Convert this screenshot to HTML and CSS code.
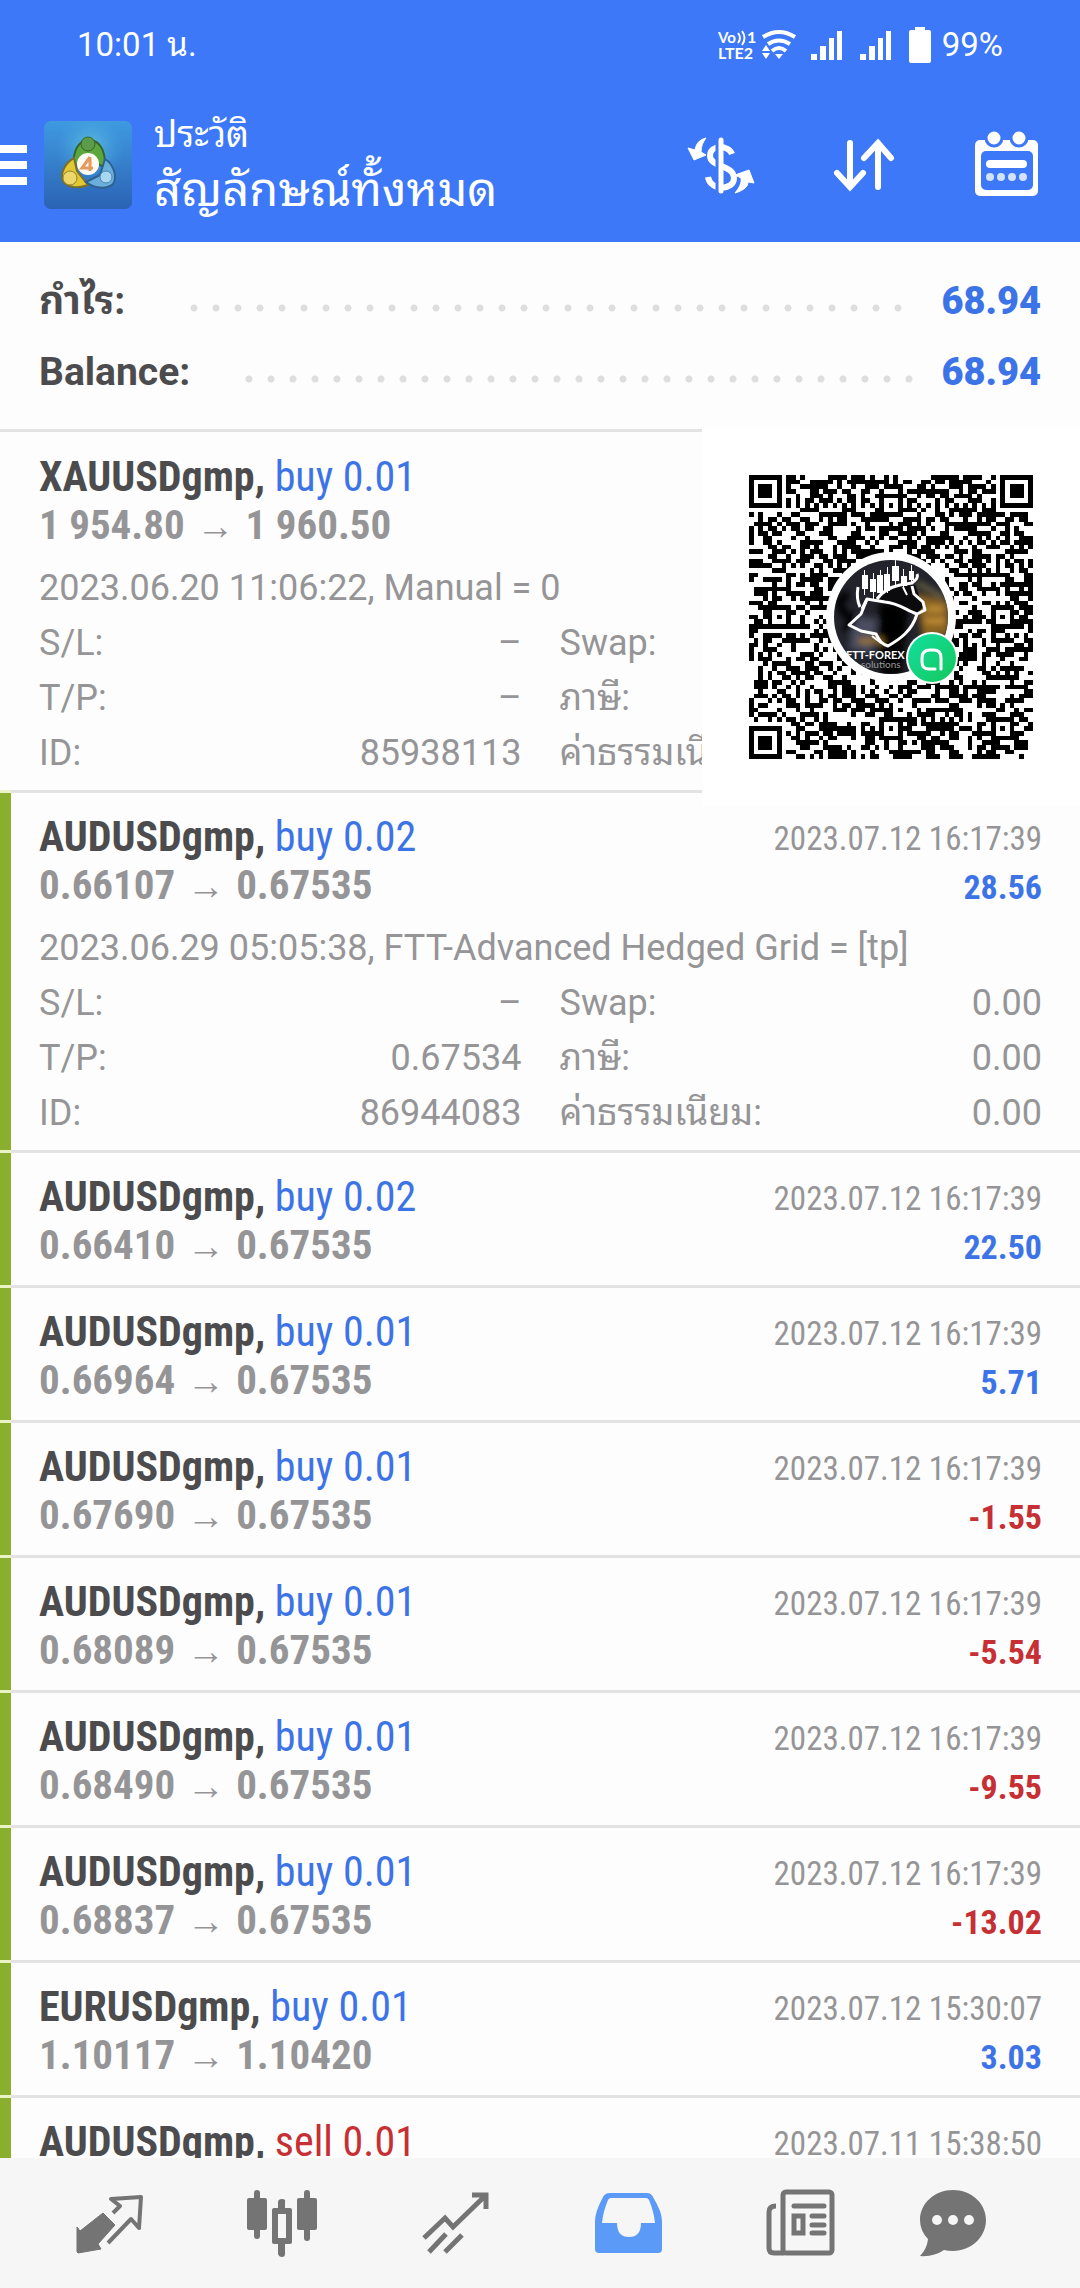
FILE: index.html
```html
<!DOCTYPE html>
<html lang="th">
<head>
    <meta charset="UTF-8">
    <meta name="viewport" content="width=device-width, initial-scale=1.0">
    <title>ประวัติ</title>
    <link rel="stylesheet" href="styles.css">
</head>
<body>
    <header class="header">
        <div class="status-bar">
            <span class="clock">10:01 น.</span>
            <div class="status-icons">
                <svg class="volte" width="40" height="36" viewBox="0 0 40 36" fill="#fff">
                    <text x="0" y="16" font-size="15">Vo</text>
                    <path d="M20 6q4 5 0 10M24 4q5 7 0 14" fill="none" stroke="#fff" stroke-width="2"/>
                    <text x="29" y="16" font-size="16">1</text>
                    <text x="0" y="32" font-size="16">LTE2</text>
                </svg>
                <svg class="wifi" width="36" height="36" viewBox="0 0 36 36">
                    <g fill="none" stroke="#fff" stroke-width="4">
                        <path d="M2 10Q18 0 34 10"/>
                        <path d="M7 17Q18 10 29 17"/>
                        <path d="M11 24Q18 18 25 24"/>
                    </g>
                    <path d="M14 27h8l-4 5zM1 24h8l-4-6zM1 26h8l-4 6z" fill="#fff"/>
                </svg>
                <svg class="signal" width="32" height="36" viewBox="0 0 32 36" fill="#fff">
                    <path d="M0 27h6v6H0zM9 19h6v14H9zM18 11h5v22h-5zM26 4h5v29h-5z"/>
                </svg>
                <svg class="signal" width="32" height="36" viewBox="0 0 32 36" fill="#fff">
                    <path d="M0 27h6v6H0zM9 19h6v14H9zM18 11h5v22h-5zM26 4h5v29h-5z"/>
                </svg>
                <svg width="22" height="36" viewBox="0 0 22 36" fill="#fff">
                    <path d="M6 0h10v3h4q2 0 2 2v29q0 2-2 2H2q-2 0-2-2V5q0-2 2-2h4z"/>
                </svg>
                <span class="battery">99%</span>
            </div>
        </div>

        <div class="toolbar">
            <button class="menu-button" aria-label="Menu"><i></i><i></i><i></i></button>
            <svg class="app-logo" width="88" height="88" viewBox="0 0 88 88">
                <defs>
                    <linearGradient id="logoBg" x1="0" y1="0" x2="0" y2="1">
                        <stop offset="0" stop-color="#3f9ae0"/>
                        <stop offset="1" stop-color="#2b62b4"/>
                    </linearGradient>
                    <radialGradient id="logoGlow">
                        <stop offset="0" stop-color="#5fc0dc"/>
                        <stop offset="1" stop-color="#3f9ae0" stop-opacity="0"/>
                    </radialGradient>
                </defs>
                <rect width="88" height="88" rx="7" fill="url(#logoBg)"/>
                <circle cx="46" cy="26" r="36" fill="url(#logoGlow)"/>
                <path d="M30 46C28 28 36 19 45 19s17 8 16 28L46 38z" fill="#5da63d" stroke="#35652c" stroke-width="2"/>
                <circle cx="44" cy="23" r="7" fill="#5c9b49" stroke="#35652c" stroke-width="1"/>
                <path d="M30 37C20 42 16 54 19 60c5 8 18 7 25 4L33 50z" fill="#e3c832" stroke="#76702c" stroke-width="2"/>
                <circle cx="26" cy="57" r="7" fill="#eed76a" stroke="#8f7f2e" stroke-width="1"/>
                <path d="M61 38c8 5 13 17 8 25-7 6-20 4-27-2l14-7z" fill="#6aaedb" stroke="#2d6190" stroke-width="2"/>
                <circle cx="62" cy="56" r="6" fill="#a9d7f0" stroke="#4786b5" stroke-width="1"/>
                <circle cx="44" cy="43" r="11" fill="#fffaf4"/>
                <path d="M46 36l-8 11h11M46 36v14" fill="none" stroke="#e39a5c" stroke-width="3"/>
            </svg>
            <div class="titles">
                <div class="subtitle">ประวัติ</div>
                <h1 class="title">สัญลักษณ์ทั้งหมด</h1>
            </div>
            <div class="actions">
                <button class="icon-button" aria-label="Deals">
                    <svg width="72" height="72" viewBox="0 0 72 72">
                        <path d="M47 25C44 16 25 15 25 27c0 11 24 9 24 22 0 13-24 13-26-1" fill="none" stroke="#fff" stroke-width="6"/>
                        <path d="M33 8v57" stroke="#3c78f8" stroke-width="5"/>
                        <path d="M36 11v51" stroke="#fff" stroke-width="5" stroke-linecap="round"/>
                        <path d="M21 9C13 11 11 16 10 21l-7-2 6 12 12-5-5-3c0-6 2-10 5-14zM50 64c10-3 13-7 13-11l6 1-5-13-14 5 6 3c1 5-2 10-6 15z" fill="#fff" stroke="#fff" stroke-width="1" stroke-linejoin="round"/>
                    </svg>
                </button>
                <button class="icon-button" aria-label="Sort">
                    <svg width="72" height="72" viewBox="0 0 72 72" fill="none" stroke="#fff" stroke-width="6" stroke-linecap="round">
                        <path d="M22 14v44M9 44l13 14 13-14M50 58V14M36 29l14-15 13 15"/>
                    </svg>
                </button>
                <button class="icon-button" aria-label="Calendar">
                    <svg width="72" height="72" viewBox="0 0 72 72">
                        <rect x="4" y="11" width="63" height="56" rx="5" fill="#fff"/>
                        <rect x="10" y="22" width="52" height="39" rx="5" fill="#3c78f8"/>
                        <g fill="#fff" stroke="#3c78f8" stroke-width="3">
                            <circle cx="23" cy="9" r="8"/>
                            <circle cx="48" cy="9" r="8"/>
                        </g>
                        <rect x="15" y="31" width="41" height="8" rx="4" fill="#fff"/>
                        <g fill="#d3e3ff">
                            <circle cx="19" cy="48" r="4"/>
                            <circle cx="30" cy="48" r="4"/>
                            <circle cx="41" cy="48" r="4"/>
                            <circle cx="52" cy="48" r="4"/>
                        </g>
                    </svg>
                </button>
            </div>
        </div>
    </header>

    <main class="content">
        <section class="summary">
            <div class="summary-row"><span class="label">กำไร:</span><i class="dots"></i><b class="total blue">68.94</b></div>
            <div class="summary-row"><span class="label">Balance:</span><i class="dots"></i><b class="total blue">68.94</b></div>
        </section>

        <div class="history">
            <ul class="deals">
                <li class="deal">
                    <div class="deal-body plain">
                        <div class="line"><span class="symbol">XAUUSDgmp, <span class="side blue">buy 0.01</span></span></div>
                        <div class="line"><span class="prices">1 954.80 <span class="arrow">→</span> 1 960.50</span></div>
                        <div class="details">
                            <p class="comment">2023.06.20 11:06:22, Manual = 0</p>
                            <dl>
                                <div><dt>S/L:</dt><dd>–</dd></div>
                                <div><dt>Swap:</dt><dd></dd></div>
                                <div><dt>T/P:</dt><dd>–</dd></div>
                                <div><dt>ภาษี:</dt><dd></dd></div>
                                <div><dt>ID:</dt><dd>85938113</dd></div>
                                <div><dt>ค่าธรรมเนียม:</dt><dd></dd></div>
                            </dl>
                        </div>
                    </div>
                </li>
                <li class="deal">
                    <div class="deal-body">
                        <div class="line"><span class="symbol">AUDUSDgmp, <span class="side blue">buy 0.02</span></span><time>2023.07.12 16:17:39</time></div>
                        <div class="line"><span class="prices">0.66107 <span class="arrow">→</span> 0.67535</span><b class="profit blue">28.56</b></div>
                        <div class="details">
                            <p class="comment">2023.06.29 05:05:38, FTT-Advanced Hedged Grid = [tp]</p>
                            <dl>
                                <div><dt>S/L:</dt><dd>–</dd></div>
                                <div><dt>Swap:</dt><dd>0.00</dd></div>
                                <div><dt>T/P:</dt><dd>0.67534</dd></div>
                                <div><dt>ภาษี:</dt><dd>0.00</dd></div>
                                <div><dt>ID:</dt><dd>86944083</dd></div>
                                <div><dt>ค่าธรรมเนียม:</dt><dd>0.00</dd></div>
                            </dl>
                        </div>
                    </div>
                </li>
                <li class="deal">
                    <div class="deal-body">
                        <div class="line"><span class="symbol">AUDUSDgmp, <span class="side blue">buy 0.02</span></span><time>2023.07.12 16:17:39</time></div>
                        <div class="line"><span class="prices">0.66410 <span class="arrow">→</span> 0.67535</span><b class="profit blue">22.50</b></div>
                    </div>
                </li>
                <li class="deal">
                    <div class="deal-body">
                        <div class="line"><span class="symbol">AUDUSDgmp, <span class="side blue">buy 0.01</span></span><time>2023.07.12 16:17:39</time></div>
                        <div class="line"><span class="prices">0.66964 <span class="arrow">→</span> 0.67535</span><b class="profit blue">5.71</b></div>
                    </div>
                </li>
                <li class="deal">
                    <div class="deal-body">
                        <div class="line"><span class="symbol">AUDUSDgmp, <span class="side blue">buy 0.01</span></span><time>2023.07.12 16:17:39</time></div>
                        <div class="line"><span class="prices">0.67690 <span class="arrow">→</span> 0.67535</span><b class="profit red">-1.55</b></div>
                    </div>
                </li>
                <li class="deal">
                    <div class="deal-body">
                        <div class="line"><span class="symbol">AUDUSDgmp, <span class="side blue">buy 0.01</span></span><time>2023.07.12 16:17:39</time></div>
                        <div class="line"><span class="prices">0.68089 <span class="arrow">→</span> 0.67535</span><b class="profit red">-5.54</b></div>
                    </div>
                </li>
                <li class="deal">
                    <div class="deal-body">
                        <div class="line"><span class="symbol">AUDUSDgmp, <span class="side blue">buy 0.01</span></span><time>2023.07.12 16:17:39</time></div>
                        <div class="line"><span class="prices">0.68490 <span class="arrow">→</span> 0.67535</span><b class="profit red">-9.55</b></div>
                    </div>
                </li>
                <li class="deal">
                    <div class="deal-body">
                        <div class="line"><span class="symbol">AUDUSDgmp, <span class="side blue">buy 0.01</span></span><time>2023.07.12 16:17:39</time></div>
                        <div class="line"><span class="prices">0.68837 <span class="arrow">→</span> 0.67535</span><b class="profit red">-13.02</b></div>
                    </div>
                </li>
                <li class="deal">
                    <div class="deal-body">
                        <div class="line"><span class="symbol">EURUSDgmp, <span class="side blue">buy 0.01</span></span><time>2023.07.12 15:30:07</time></div>
                        <div class="line"><span class="prices">1.10117 <span class="arrow">→</span> 1.10420</span><b class="profit blue">3.03</b></div>
                    </div>
                </li>
                <li class="deal">
                    <div class="deal-body">
                        <div class="line"><span class="symbol">AUDUSDgmp, <span class="side red">sell 0.01</span></span><time>2023.07.11 15:38:50</time></div>
                    </div>
                </li>
            </ul>

            <div class="qr-card">
                <svg width="284" height="284" viewBox="0 0 284 284">
                    <defs>
                        <clipPath id="avatarClip"><circle cx="142" cy="142" r="57"/></clipPath>
                        <linearGradient id="badgeBg" x1="0" y1="0" x2="1" y2="1">
                            <stop offset="0" stop-color="#12dfa0"/>
                            <stop offset="1" stop-color="#15c75c"/>
                        </linearGradient>
                        <filter id="soft"><feGaussianBlur stdDeviation="3"/></filter>
                    </defs>
                    <svg width="284" height="284" viewBox="0 0 61 61" shape-rendering="crispEdges"><path id="qrModules"/></svg>
                    <circle cx="142" cy="142" r="65" fill="#fff"/>
                    <g clip-path="url(#avatarClip)">
                        <rect x="85" y="85" width="114" height="114" fill="#22232b"/>
                        <g filter="url(#soft)">
                            <path d="M130 128h30l-8 72h-20z" fill="#060505"/>
                            <path d="M104 140l24 4-4 34-24-4z" fill="#4a4d5e"/>
                            <path d="M166 118l34 8v34l-26 4z" fill="#8a6420"/>
                            <path d="M168 108l26 14" stroke="#7f7448" stroke-width="4"/>
                            <path d="M110 166h24" stroke="#a4792b" stroke-width="5"/>
                            <path d="M100 120q-12 2-8 12t10 10-6 14" fill="none" stroke="#050506" stroke-width="8"/>
                            <path d="M178 134h16M176 146h20" stroke="#d09a3c" stroke-width="4"/>
                        </g>
                        <path d="M117 123l12-1 19-10 18-2 8 22-6 6-32-12z" fill="#0b0b0d"/>
                        <g fill="#fff">
                            <path d="M113 100h6v14h-6zM121 104h6v13h-6zM128 100h6v18h-6zM135 99h6v17h-6zM143 91h7v15h-7zM152 101h6v10h-6zM160 96h5v9h-5z"/>
                            <path d="M115 95h1v25h-1zM124 98h1v27h-1zM131 95h1v27h-1zM138 92h1v26h-1zM146 84h1v28h-1zM154 94h1v20h-1zM162 90h1v18h-1z"/>
                        </g>
                        <g fill="none" stroke="#fff" stroke-width="3" stroke-linejoin="round">
                            <path d="M113 134l5-10 18 3c14 1 22 9 32 12l8-4-2-8-9-8-2-8"/>
                            <path d="M118 124l-6 15-12 11 12 6 15 3c4 8 6 10 12 12 12-7 24-15 29-32"/>
                            <path d="M109 112q-2 12 2 20M128 124q8-11 23-14l12-2q7-5 5-9"/>
                            <path d="M123 161l9 7M154 112l4 8" stroke-width="2"/>
                        </g>
                        <text x="97" y="184" class="avatar-name">FTT-FOREX</text>
                        <text x="112" y="193" class="avatar-sub">solutions</text>
                    </g>
                    <circle cx="183" cy="183" r="26" fill="#fff"/>
                    <circle cx="183" cy="183" r="24" fill="url(#badgeBg)"/>
                    <path d="M186 194h-6q-7 0-7-7v-4q0-8 8-8h4q7 0 7 8v11" fill="none" stroke="#fff" stroke-width="3" stroke-linecap="round" stroke-linejoin="round"/>
                </svg>
            </div>
        </div>
    </main>

    <nav class="tab-bar">
        <button class="tab" aria-label="Quotes">
            <svg width="72" height="72" viewBox="0 0 72 72">
                <path d="M4 39l3 4 23-18 12 12-17 19 3 5-23 4-1-1z" fill="currentColor" stroke="currentColor" stroke-width="1" stroke-linejoin="round"/>
                <path d="M40 25l7-7-9-7 30-2-2 31-8-9-23 24" fill="none" stroke="currentColor" stroke-width="4" stroke-linejoin="round"/>
            </svg>
        </button>
        <button class="tab" aria-label="Charts">
            <svg width="72" height="72" viewBox="0 0 72 72" fill="currentColor">
                <rect x="1" y="10" width="20" height="32" rx="2"/>
                <rect x="8" y="2" width="6" height="49" rx="3"/>
                <path d="M28 20h4v-6q0-3 4-3t3 3v6h5q2 0 2 2v32q0 2-2 2h-5v10q0 3-3 3t-4-3V56h-4q-2 0-2-2V22q0-2 2-2zm4 6v24h8V26z" fill-rule="evenodd"/>
                <rect x="51" y="10" width="20" height="32" rx="2"/>
                <rect x="58" y="2" width="6" height="51" rx="3"/>
            </svg>
        </button>
        <button class="tab" aria-label="Trade">
            <svg width="72" height="72" viewBox="0 0 72 72" fill="none" stroke="currentColor" stroke-width="5">
                <path d="M5 50l21-20 8 9L67 7M53 7h14v14M27 46L10 64M43 47L26 64"/>
            </svg>
        </button>
        <button class="tab active" aria-label="History">
            <svg width="72" height="72" viewBox="0 0 72 72" fill="currentColor">
                <path d="M18 5h37q4 0 6 4 9 15 9 24v28q0 4-4 4H7q-4 0-4-4V33q0-9 8-24 2-4 7-4zm1 5q-2 0-3 2-5 12-6 23h15q0 14 12 14t12-14h14q-1-11-6-23-1-2-3-2z" fill-rule="evenodd"/>
            </svg>
        </button>
        <button class="tab" aria-label="News">
            <svg width="72" height="72" viewBox="0 0 72 72" fill="none" stroke="currentColor" stroke-width="5">
                <rect x="18" y="4" width="49" height="61" rx="3"/>
                <path d="M11 18q-7 0-7 6v36q0 5 5 5h10"/>
                <path d="M29 18h30M47 28h12M47 37h12M47 45h12" stroke-linecap="round"/>
                <rect x="29" y="28" width="9" height="17"/>
            </svg>
        </button>
        <button class="tab" aria-label="Messages">
            <svg width="72" height="72" viewBox="0 0 72 72">
                <path d="M36 2c18 0 33 13 33 30S54 63 36 63q-5 0-9-1-10 7-24 6 7-7 8-17Q3 43 3 32C3 15 18 2 36 2z" fill="currentColor"/>
                <g fill="#f6f6f6">
                    <circle cx="20" cy="32" r="5"/>
                    <circle cx="36" cy="32" r="5"/>
                    <circle cx="52" cy="32" r="5"/>
                </g>
            </svg>
        </button>
    </nav>

    <script src="script.js"></script>
</body>
</html>
```
FILE: styles.css
```css
* {
    box-sizing: border-box;
}
body {
    margin: 0;
    height: 100vh;
    display: flex;
    flex-direction: column;
    background-color: #fdfdfd;
    font-family: Roboto, "Noto Sans Thai Looped", "Noto Looped Thai", Loma, Waree, Garuda, "Noto Sans Thai", sans-serif;
    color: #959597;
}
button {
    padding: 0;
    border: none;
    background: none;
    color: inherit;
    cursor: pointer;
}
svg {
    display: block;
}
.blue {
    color: #3c74e8;
}
.red {
    color: #c62f33;
}

/* header */
.header {
    flex: none;
    background-color: #3c78f8;
    color: #fff;
    padding-bottom: 2px;
}
.status-bar {
    display: flex;
    justify-content: space-between;
    align-items: center;
    height: 90px;
    padding: 0 77px;
}
.clock, .battery {
    font-size: 33px;
    line-height: 36px;
}
.status-icons {
    display: flex;
    align-items: center;
}
.volte {
    font-family: Lato, sans-serif;
    font-weight: bold;
}
.wifi {
    margin: 0 14px 0 3px;
}
.signal {
    margin-right: 17px;
}
.battery {
    margin-left: 11px;
}
.toolbar {
    display: flex;
    align-items: center;
    height: 150px;
    padding-right: 37px;
}
.menu-button {
    display: flex;
    flex-direction: column;
    gap: 8px;
    width: 27px;
    margin-right: 17px;
}
.menu-button i {
    height: 8px;
    width: 100%;
    background-color: #fff;
}
.titles {
    flex: 1;
    margin-left: 22px;
}
.subtitle {
    font-size: 36px;
    line-height: 50px;
}
.title {
    margin: 0;
    font-size: 47px;
    font-weight: 400;
    line-height: 60px;
}
.actions {
    display: flex;
    gap: 71px;
}

/* totals */
.content {
    flex: 1;
    min-height: 0;
    overflow-y: auto;
    scrollbar-width: none;
}
.summary {
    padding: 24px 39px 21px;
    border-bottom: 3px solid #e3e3e3;
}
.summary-row {
    display: flex;
    align-items: center;
    height: 71px;
    font-size: 39px;
    font-weight: bold;
    line-height: 71px;
    color: #4c4c4e;
}
.label {
    min-width: 96px;
}
.total {
    font-size: 38px;
}
.dots {
    flex: 1;
    height: 8px;
    margin: 12px 28px 0 48px;
    background: radial-gradient(circle at 11px 4px, #dedede 3px, transparent 4px) repeat-x;
    background-size: 22px 8px;
}

/* deals */
.history {
    position: relative;
}
.deals {
    margin: 0;
    padding: 1px 0 0;
    list-style: none;
}
.deal {
    border-bottom: 3px solid #e3e3e3;
    border-image: linear-gradient(to right, #eaf3c4 11px, #e3e3e3 11px) 0 0 3 0;
}
.deal-body {
    border-left: 11px solid #8aae2d;
    padding: 20px 38px 16px 28px;
}
.deal-body.plain {
    border-left-color: transparent;
}
.line {
    display: flex;
    justify-content: space-between;
    height: 48px;
    font-family: "Roboto Condensed", Roboto, "Noto Sans", sans-serif;
    font-size: 42px;
    line-height: 48px;
    white-space: nowrap;
}
.symbol {
    font-weight: bold;
    color: #4c4c4e;
}
.side {
    font-weight: 400;
}
.prices {
    font-size: 41px;
    font-weight: bold;
}
.arrow {
    margin: 0 2px;
    font-size: 38px;
    font-weight: 400;
}
.line time, .profit {
    line-height: 52px;
}
.line time {
    font-size: 33px;
}
.profit {
    font-size: 34px;
}
.details {
    margin: 11px 0 -7px;
    font-size: 36px;
}
.comment {
    margin: 0;
    line-height: 56px;
}
.details dl {
    display: grid;
    grid-template-columns: 1fr 1fr;
    column-gap: 38px;
    margin: 0;
    line-height: 55px;
}
.details dl div {
    display: flex;
    justify-content: space-between;
    height: 55px;
}
.details dd {
    margin: 0;
}

/* QR card lies over the first deal */
.qr-card {
    position: absolute;
    top: -4px;
    right: 0;
    padding: 47px;
    background-color: #fff;
}
.avatar-name {
    font: bold 11px Lato, sans-serif;
    fill: #fff;
}
.avatar-sub {
    font: 10px Lato, sans-serif;
    fill: #999;
}
#qrModules {
    fill: #000;
}

/* bottom tabs */
.tab-bar {
    flex: none;
    display: flex;
    align-items: center;
    height: 130px;
    padding: 2px 61px 0 22px;
    background-color: #f6f6f6;
    color: #747474;
}
.tab {
    flex: 173;
    display: flex;
    justify-content: center;
}
.tab:last-child {
    flex: 132;
}
.tab.active {
    color: #5c9af8;
}
```
FILE: script.js
```javascript
// QR modules, 61 x 61
const SIZE = 61;
const path = document.getElementById('qrModules');
let seed = 20230712;

function random() {
    seed ^= seed << 13;
    seed ^= seed >>> 17;
    seed ^= seed << 5;
    return (seed >>> 0) / 4294967296;
}

// square rings around a centre: finder (radius 3) and alignment (radius 2)
function ring(x, y, cx, cy) {
    return Math.max(Math.abs(x - cx), Math.abs(y - cy));
}

function isDark(x, y) {
    const noise = random() < 0.52;
    for (const [cx, cy] of [[3, 3], [57, 3], [3, 57]]) {
        const r = ring(x, y, cx, cy);
        if (r <= 4) return r !== 2 && r !== 4;
    }
    for (const [cx, cy] of [[30, 6], [6, 30], [54, 30], [30, 54], [54, 54]]) {
        const r = ring(x, y, cx, cy);
        if (r <= 2) return r !== 1;
    }
    if (x === 6) return y % 2 === 0;
    if (y === 6) return x % 2 === 0;
    return noise;
}

let d = '';
for (let y = 0; y < SIZE; y++) {
    for (let x = 0; x < SIZE; x++) {
        if (isDark(x, y)) d += `M${x} ${y}h1v1h-1z`;
    }
}
path.setAttribute('d', d);
```
